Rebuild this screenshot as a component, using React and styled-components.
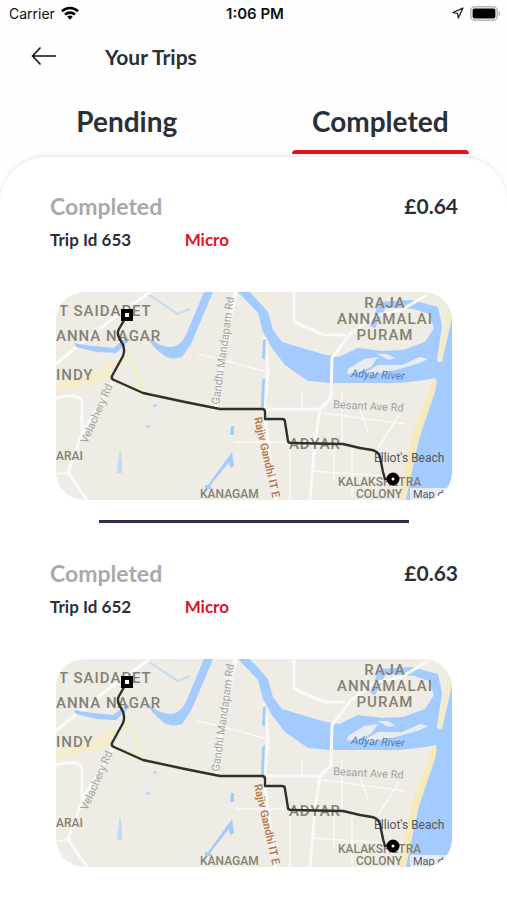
import React, { useId, useState } from 'react'
import styled, { createGlobalStyle } from 'styled-components'

const GlobalStyle = createGlobalStyle`
  * {
    box-sizing: border-box;
  }
  body {
    margin: 0;
    background: #fefefe;
    color: #2b3037;
    font-family: Lato, 'Open Sans', sans-serif;
    overflow-x: hidden;
  }
  button {
    border: 0;
    padding: 0;
    background: none;
    color: inherit;
    font: inherit;
    cursor: pointer;
  }
`

const Page = styled.div`
  display: flex;
  flex-direction: column;
  min-height: 100vh;
`

const StatusBar = styled.div`
  display: grid;
  grid-template-columns: 1fr auto 1fr;
  align-items: center;
  height: 26px;
  padding: 0 6px 0 9px;
  color: #111;
  font-family: Inter, sans-serif;
  font-size: 14px;
`

const Carrier = styled.div`
  display: flex;
  align-items: center;
  gap: 6px;
`

const Clock = styled.time`
  font-size: 15px;
  font-weight: 600;
`

const Indicators = styled.div`
  display: flex;
  align-items: center;
  justify-content: flex-end;
  gap: 6px;
`

const Header = styled.header`
  display: flex;
  align-items: center;
  gap: 48px;
  height: 60px;
  padding: 0 30px;
`

const BackButton = styled.button`
  display: flex;
`

const Title = styled.h1`
  margin: 0;
  font-size: 21px;
  font-weight: 700;
`

const Tabs = styled.div`
  display: grid;
  grid-template-columns: 1fr 1fr;
  position: relative;
  z-index: 1;
  height: 68px;
`

const Tab = styled.button`
  display: flex;
  flex-direction: column;
  align-items: center;
  justify-content: space-between;
  padding-top: 18px;
  font-size: 28px;
  font-weight: 700;
  line-height: 34px;

  &::after {
    content: '';
    width: 70%;
    height: 4px;
    border-radius: 4px 4px 0 0;
    background: ${(p) => (p.$active ? '#dc1620' : 'transparent')};
  }
`

const Sheet = styled.main`
  flex: 1;
  margin-top: 3px;
  padding: 34px 49px 32px 50px;
  border-radius: 46px 46px 0 0;
  background: #fff;
  box-shadow: 0 -1px 4px rgba(0, 0, 0, 0.1);
`

const Trip = styled.article`
  display: flex;
  flex-direction: column;
`

const TopRow = styled.div`
  display: flex;
  justify-content: space-between;
  font-size: 23px;
  font-weight: 700;
  line-height: 30px;
`

const Status = styled.span`
  color: #a9a9ab;
`

const Fare = styled.span`
  font-size: 21px;
`

const DetailRow = styled.div`
  display: grid;
  grid-template-columns: 33% 1fr;
  padding-top: 7px;
  font-size: 17px;
  font-weight: 700;
  line-height: 24px;
`

const CarType = styled.span`
  color: #e3131f;
`

const MapFrame = styled.div`
  margin: 40px 6px 0;
  overflow: hidden;
  border-radius: 28px;

  svg {
    display: block;
    width: 100%;
  }
`

const Divider = styled.hr`
  width: 76%;
  height: 3px;
  margin: 20px auto 35px;
  border: 0;
  background: #30304a;
`

const WifiIcon = () => (
  <svg width="18" height="14" viewBox="0 0 18 14" fill="none" stroke="#000" strokeWidth="2.6">
    <path d="M1 5.2a11.6 11.6 0 0 1 16 0" />
    <path d="M4 8.6a7.2 7.2 0 0 1 10 0" />
    <path d="M6.2 10.8a4 4 0 0 1 5.6 0L9 13.8z" fill="#000" stroke="none" />
  </svg>
)

const LocationIcon = () => (
  <svg width="12" height="12" viewBox="0 0 12 12" fill="none" stroke="#222" strokeWidth="1.3" strokeLinejoin="round">
    <path d="M11 1 1 5.7l4.6.6.7 4.7z" />
  </svg>
)

const BatteryIcon = () => (
  <svg width="31" height="15" viewBox="0 0 31 15">
    <rect x="0.8" y="0.8" width="26.4" height="13.4" rx="4" fill="#fff" stroke="#b4b4b4" strokeWidth="1.5" />
    <rect x="2.6" y="2.6" width="22.8" height="9.8" rx="2" fill="#000" />
    <path d="M28.6 5.2c2 .8 2 3.8 0 4.6z" fill="#aaa" />
  </svg>
)

const BackArrow = () => (
  <svg width="27" height="20" viewBox="0 0 27 20" fill="none" stroke="#111" strokeWidth="1.6">
    <path d="M2.5 10H26M10.5 1.5 2.5 10l8 8.5" />
  </svg>
)

const RouteMap = () => {
  const blur = useId()
  return (
    <svg viewBox="0 0 396 208" role="img" aria-label="Trip route" fontFamily="Roboto, sans-serif">
      <defs>
        <filter id={blur}>
          <feGaussianBlur stdDeviation="0.6" />
        </filter>
      </defs>
      <rect width="396" height="208" fill="#eeece5" />
      <g filter={`url(#${blur})`}>
        {/* parkland and side roads */}
        <path d="M0 92 36 82 55 66 60 74 52 88 0 101z" fill="#f4ecca" />
        <path d="M56 86 87 101 129 110 164 117H208" fill="none" stroke="#f4ecc9" strokeWidth="4" />
        <path d="M50 80 74 64 87 97" fill="none" stroke="#f4ecca" strokeWidth="4" />
        <g fill="none" stroke="#fbfaf7">
          <path d="M0 72Q26 50 50 32T94 0" strokeWidth="3" />
          <path d="M58 88 26 142 12 180 31 208M0 106Q24 100 26 110V142" strokeWidth="3" />
          <path d="M180 0 173 30 166 63 160 117" strokeWidth="4" />
          <path d="M208 117H264M209 45 212 80 208 120 220 208" strokeWidth="3" />
          <path d="M238 0V30L268 43H290" strokeWidth="3" />
          <path
            d="M211 80 175 70 142 62M178 150H260M256 179 328 184M266 121 350 132M246 118V100M286 100V150M304 118 312 140M343 123 322 156M278 150V190M296 153V205M234 152V208M0 182 15 180"
            strokeWidth="1.5"
          />
          <path d="M93 3 122 22 134 17" stroke="#c8daf0" strokeWidth="2" />
        </g>

        {/* water */}
        <g fill="#a3cbfd">
          <path d="M18 51 29 53 57 56 71 45 74 48 60 61 40 60 20 55z" />
          <path d="M91 44Q101 54 114 55 126 55 132 38L148 0H157L135 52 126 65Q114 69 106 62 96 55 91 44z" />
          <path d="M182 0H194L212 20 217 38 226 50 246 56 270 63 283 65 302 56 326 59 347 58 369 50 378 36 373 22 358 17 330 15 319 36 314 34 323 10 356 8 382 15 386 34 381 68 384 71 392 20 396 12V208H349L363 147 378 98 380 86Q352 92 325 91L291 91 274 91 252 89 229 73 216 56 207 40 202 21z" />
          <path d="M207 48 210 47 209 68 206 66zM206 88 209 86 208 116H205zM175 134H178V143H174zM176 160 178 174 174 176 173 170 154 194 157 197H149V193H152z" />
          <path d="M64 156 66 170V181H61zM97 112h4v3h-4zM90 133h4v3h-4z" opacity="0.6" />
        </g>
        <path
          d="M292 77 308 67 322 65 315 75 303 80 291 82zM321 62l10 0 8 4-6 2zM310 80l12-7 24 0 18-8 8 2-8 4-24 7-26 5z"
          fill="#e9ecee"
        />

        {/* bridge and the road through it */}
        <path
          d="M371 3 345 18 318 24 294 42 276 66 275 106 264 117 259 150 254 208"
          fill="none"
          stroke="#fbfaf7"
          strokeWidth="3"
        />

        {/* beach */}
        <path d="M396 10V26L386 70 381 69 392 20z" fill="#f3ecc8" />
        <path d="M378 86 381 89 379 100 362 150 350 208H342L352 160 356 142z" fill="#f5eabd" />
        <rect x="354" y="196" width="42" height="12" fill="#e5ebf1" />
      </g>

      <g fill="#868073" fontSize="15" fontWeight="500" letterSpacing="1">
        <text x="3" y="24">T SAIDAPET</text>
        <text x="0" y="49">ANNA NAGAR</text>
        <text x="0" y="88">INDY</text>
        <g textAnchor="middle">
          <text x="329" y="16">RAJA</text>
          <text x="329" y="32">ANNAMALAI</text>
          <text x="329" y="48">PURAM</text>
          <text x="259" y="157">ADYAR</text>
        </g>
      </g>
      <g fill="#868073" fontSize="12" fontWeight="500">
        <text x="0" y="168">ARAI</text>
        <text x="144" y="206">KANAGAM</text>
        <text x="282" y="194">KALAKSHETRA</text>
        <text x="300" y="206">COLONY</text>
      </g>
      <g fill="#a3a29f" fontSize="11">
        <text transform="translate(31 152) rotate(-66)">Velachery Rd</text>
        <text transform="translate(163 113) rotate(-82)">Gandhi Mandapam Rd</text>
        <text transform="translate(277 116) rotate(3)">Besant Ave Rd</text>
      </g>
      <text transform="translate(295 85) rotate(3)" fill="#527bb0" fontSize="11" fontStyle="italic">
        Adyar River
      </text>
      <text transform="translate(198 126) rotate(77)" fill="#b0764a" fontSize="11" fontWeight="500">
        Rajiv Gandhi IT E
      </text>
      <text x="318" y="170" fill="#55565a" fontSize="12">
        Elliot's Beach
      </text>
      <text x="357" y="206" fill="#505969" fontSize="11">
        Map d
      </text>

      <path
        d="M71 23 63 37Q60 42 65 49T67 64L56 84Q55 87 58 88L87 101 129 110 164 117H206Q209 117 209 120V127H226Q229 127 229 130L232 149Q232 151 236 151L287 152 304 156 316 158Q322 159 324 165L327 180 329 187H337"
        fill="none"
        stroke="#302f2b"
        strokeWidth="2.4"
        strokeLinejoin="round"
      />
      <rect x="65" y="17" width="12" height="12" fill="#000" />
      <rect x="69" y="21" width="4" height="4" fill="#fff" />
      <circle cx="337" cy="187" r="4" fill="#fff" stroke="#000" strokeWidth="5" />
    </svg>
  )
}

const tabs = ['Pending', 'Completed']

const trips = [
  { id: 653, status: 'Completed', fare: '£0.64', car: 'Micro' },
  { id: 652, status: 'Completed', fare: '£0.63', car: 'Micro' },
]

const App = () => {
  const [active, setActive] = useState('Completed')
  const shown = trips.filter((trip) => trip.status === active)

  return (
    <Page>
      <GlobalStyle />
      <StatusBar>
        <Carrier>
          Carrier <WifiIcon />
        </Carrier>
        <Clock>1:06 PM</Clock>
        <Indicators>
          <LocationIcon />
          <BatteryIcon />
        </Indicators>
      </StatusBar>
      <Header>
        <BackButton aria-label="Back">
          <BackArrow />
        </BackButton>
        <Title>Your Trips</Title>
      </Header>
      <Tabs role="tablist">
        {tabs.map((tab) => (
          <Tab
            key={tab}
            role="tab"
            aria-selected={tab === active}
            $active={tab === active}
            onClick={() => setActive(tab)}
          >
            {tab}
          </Tab>
        ))}
      </Tabs>
      <Sheet>
        {shown.map((trip, i) => (
          <React.Fragment key={trip.id}>
            {i > 0 && <Divider />}
            <Trip>
              <TopRow>
                <Status>{trip.status}</Status>
                <Fare>{trip.fare}</Fare>
              </TopRow>
              <DetailRow>
                <span>Trip Id {trip.id}</span>
                <CarType>{trip.car}</CarType>
              </DetailRow>
              <MapFrame>
                <RouteMap />
              </MapFrame>
            </Trip>
          </React.Fragment>
        ))}
      </Sheet>
    </Page>
  )
}

export default App
